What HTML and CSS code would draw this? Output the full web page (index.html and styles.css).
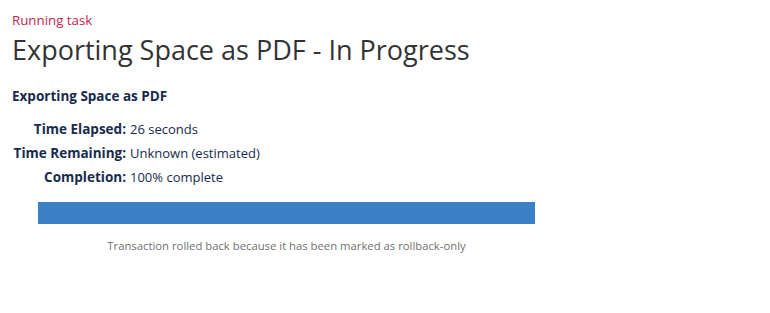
FILE: index.html
```html
<!DOCTYPE html>
<html lang="en">
<head>
<meta charset="utf-8">
<title>Exporting Space as PDF - In Progress</title>
<link rel="stylesheet" href="styles.css">
</head>
<body>
<div class="page">
  <div class="eyebrow">Running task</div>
  <h1 class="title">Exporting Space as PDF - In Progress</h1>
  <h2 class="task-name">Exporting Space as PDF</h2>
  <dl class="stats">
    <dt>Time Elapsed:</dt><dd>26 seconds</dd>
    <dt>Time Remaining:</dt><dd>Unknown (estimated)</dd>
    <dt>Completion:</dt><dd>100% complete</dd>
  </dl>
  <div class="progress-wrap">
    <div class="progress"><div class="progress-fill" style="width:100%"></div></div>
    <p class="message">Transaction rolled back because it has been marked as rollback-only</p>
  </div>
</div>
</body>
</html>
```
FILE: styles.css
```css
html, body {
  margin: 0;
  padding: 0;
  background: #fff;
}
body {
  font-family: "Open Sans", "Noto Sans", "Liberation Sans", sans-serif;
  color: #172b4d;
  font-size: 13px;
}
.page {
  padding: 11px 12px;
}
.eyebrow {
  color: #c7254e;
  font-size: 13.3px;
  line-height: 18px;
}
.title {
  margin: 3px 0 0;
  font-size: 27px;
  font-weight: 400;
  color: #333;
  line-height: 36px;
}
.task-name {
  margin: 19px 0 0;
  font-size: 13.5px;
  font-weight: 700;
  line-height: 18px;
}
.stats {
  margin: 15px 0 0;
  display: grid;
  grid-template-columns: 114px 1fr;
  column-gap: 4px;
  row-gap: 6px;
  line-height: 18px;
  font-size: 13.5px;
}
.stats dt {
  font-weight: 700;
  text-align: right;
}
.stats dd {
  margin: 0;
  font-size: 13px;
}
.progress-wrap {
  margin: 16px 0 0 26px;
  width: 497px;
}
.progress {
  height: 22px;
  background: #e9e9e9;
}
.progress-fill {
  height: 100%;
  background: #3b80c6;
}
.message {
  margin: 14px 0 0;
  text-align: center;
  font-size: 11.3px;
  color: #707070;
  line-height: 16px;
}
```
